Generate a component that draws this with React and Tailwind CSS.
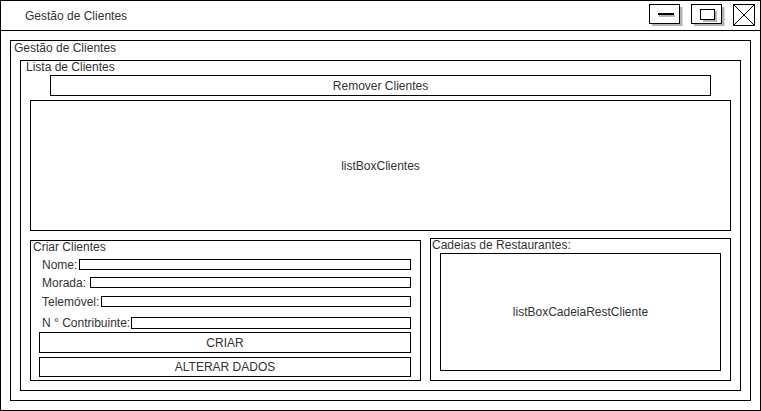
import React from "react";

function MinimizeIcon() {
  return (
    <svg width="34" height="22" viewBox="0 0 34 22">
      <path d="M32 3 V21 H3" fill="none" stroke="#b3b3b3" strokeWidth="3" />
      <rect x="0.5" y="0.5" width="30" height="19" fill="#fff" stroke="#000" />
      <line x1="10" y1="12" x2="26" y2="12" stroke="#b3b3b3" strokeWidth="2" />
      <line x1="9" y1="10" x2="25" y2="10" stroke="#000" strokeWidth="2" />
    </svg>
  );
}

function RestoreIcon() {
  return (
    <svg width="34" height="22" viewBox="0 0 34 22">
      <path d="M32 3 V21 H3" fill="none" stroke="#b3b3b3" strokeWidth="3" />
      <rect x="0.5" y="0.5" width="30" height="19" fill="#fff" stroke="#000" />
      <path d="M25 7 V17 H12" fill="none" stroke="#b3b3b3" strokeWidth="2" />
      <rect x="9.5" y="5.5" width="14" height="10" fill="#fff" stroke="#000" />
    </svg>
  );
}

function CloseIcon() {
  return (
    <svg width="22" height="22" viewBox="0 0 22 22">
      <rect x="0.5" y="0.5" width="21" height="21" fill="#fff" stroke="#000" />
      <line x1="0.5" y1="0.5" x2="21.5" y2="21.5" stroke="#000" />
      <line x1="21.5" y1="0.5" x2="0.5" y2="21.5" stroke="#000" />
    </svg>
  );
}

function Field({ label, h = "h-[11px]", mt, gap = "ml-[2px]" }) {
  return (
    <div className={`flex items-center ${h} ${mt}`}>
      <span className="pl-[3px] leading-[12px] whitespace-nowrap">{label}</span>
      <div className={`${gap} flex-1 ${h} border border-black bg-white`} />
    </div>
  );
}

export default function App() {
  return (
    <div
      className="w-[761px] h-[411px] border border-black bg-white text-[12px] text-[#333]"
      style={{ fontFamily: '"Liberation Sans", Arial, sans-serif' }}
    >
      {/* title bar */}
      <div className="h-[30px] border-b border-black flex">
        <div className="pl-[24px] flex items-center leading-[14px]">Gestão de Clientes</div>
        <div className="ml-auto flex gap-[8px] pr-[5px] pt-[3px]">
          <MinimizeIcon />
          <RestoreIcon />
          <CloseIcon />
        </div>
      </div>

      {/* Gestão de Clientes group */}
      <div className="ml-[9px] mt-[9px] w-[741px] h-[361px] border border-black">
        <div className="h-[19px] pl-[3px] leading-[14px]">Gestão de Clientes</div>

        {/* Lista de Clientes */}
        <div className="ml-[9px] w-[721px] h-[331px] border border-black px-[9px]">
          <div className="h-[14px] -ml-[4px] leading-[12px]">Lista de Clientes</div>
          <div className="mx-[20px] h-[21px] border border-black flex items-center justify-center leading-[14px]">
            Remover Clientes
          </div>
          <div className="mt-[4px] h-[131px] border border-black flex items-center justify-center">
            listBoxClientes
          </div>

          <div className="mt-[7px] flex items-end gap-[9px]">
            {/* Criar Clientes */}
            <div className="w-[391px] h-[141px] border border-black pl-[8px] pr-[9px]">
              <div className="h-[12px] leading-[12px] -ml-[6px]">Criar Clientes</div>
              <Field label="Nome:" mt="mt-[6px]" />
              <Field label="Morada:" mt="mt-[7px]" gap="ml-[4px]" />
              <Field label="Telemóvel:" mt="mt-[8px]" />
              <Field label="N ° Contribuinte:" h="h-[12px]" mt="mt-[10px]" gap="ml-[1px]" />
              <div className="mt-[3px] h-[21px] border border-black flex items-center justify-center">CRIAR</div>
              <div className="mt-[4px] h-[20px] border border-black flex items-center justify-center">ALTERAR DADOS</div>
            </div>

            {/* Cadeias de Restaurantes */}
            <div className="w-[301px] h-[143px] border border-black">
              <div className="h-[12px] leading-[12px] pl-[1px]">Cadeias de Restaurantes:</div>
              <div className="mt-[2px] ml-[9px] w-[281px] h-[118px] border border-black flex items-center justify-center">
                listBoxCadeiaRestCliente
              </div>
            </div>
          </div>
        </div>
      </div>
    </div>
  );
}
